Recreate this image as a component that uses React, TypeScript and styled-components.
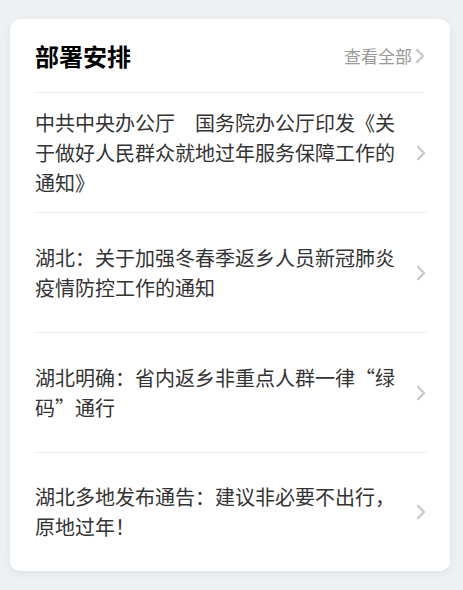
import React from "react";
import styled, { createGlobalStyle } from "styled-components";

const GlobalStyle = createGlobalStyle`
  html, body {
    margin: 0;
    padding: 0;
    background: #eef1f4;
  }
  body {
    font-family: "Noto Sans CJK SC", "Noto Sans", sans-serif;
  }
`;

const Page = styled.div`
  padding: 19px 13px 19px 10px;
`;

const Card = styled.section`
  width: 440px;
  box-sizing: border-box;
  background: #fff;
  border-radius: 10px;
  box-shadow: 0 2px 8px rgba(0, 0, 0, 0.07);
  padding: 0 24px 0 25px;
`;

const Header = styled.header`
  height: 73px;
  display: flex;
  align-items: center;
  justify-content: space-between;
  border-bottom: 1px solid #ececec;
  margin-right: 1px;
`;

const Title = styled.h2`
  margin: 0;
  font-size: 24px;
  font-weight: 700;
  color: #000;
  line-height: 1;
`;

const More = styled.a`
  display: flex;
  align-items: center;
  gap: 3px;
  font-size: 17px;
  color: #999;
  text-decoration: none;
  cursor: pointer;
`;

const List = styled.ul`
  list-style: none;
  margin: 0;
  padding: 0;
`;

const Item = styled.li`
  height: 120px;
  box-sizing: border-box;
  display: flex;
  align-items: center;
  gap: 19px;
  border-bottom: 1px solid #ececec;
  &:last-child {
    border-bottom: none;
    height: 118px;
  }
`;

const ItemText = styled.p`
  flex: 1;
  margin: 0;
  font-size: 20px;
  line-height: 30px;
  color: #333;
`;

const Chevron = ({ color = "#cccccc" }: { color?: string }) => (
  <svg width="10" height="16" viewBox="0 0 10 16" fill="none">
    <path d="M2 1.8 L8 8 L2 14.2" stroke={color} strokeWidth="2.5" strokeLinecap="round" strokeLinejoin="round" />
  </svg>
);

const items = [
  "中共中央办公厅　国务院办公厅印发《关于做好人民群众就地过年服务保障工作的通知》",
  "湖北：关于加强冬春季返乡人员新冠肺炎疫情防控工作的通知",
  "湖北明确：省内返乡非重点人群一律“绿码”通行",
  "湖北多地发布通告：建议非必要不出行，原地过年！",
];

export default function App() {
  return (
    <Page>
      <GlobalStyle />
      <Card>
        <Header>
          <Title>部署安排</Title>
          <More>
            查看全部
            <Chevron />
          </More>
        </Header>
        <List>
          {items.map((t) => (
            <Item key={t}>
              <ItemText>{t}</ItemText>
              <Chevron />
            </Item>
          ))}
        </List>
      </Card>
    </Page>
  );
}
